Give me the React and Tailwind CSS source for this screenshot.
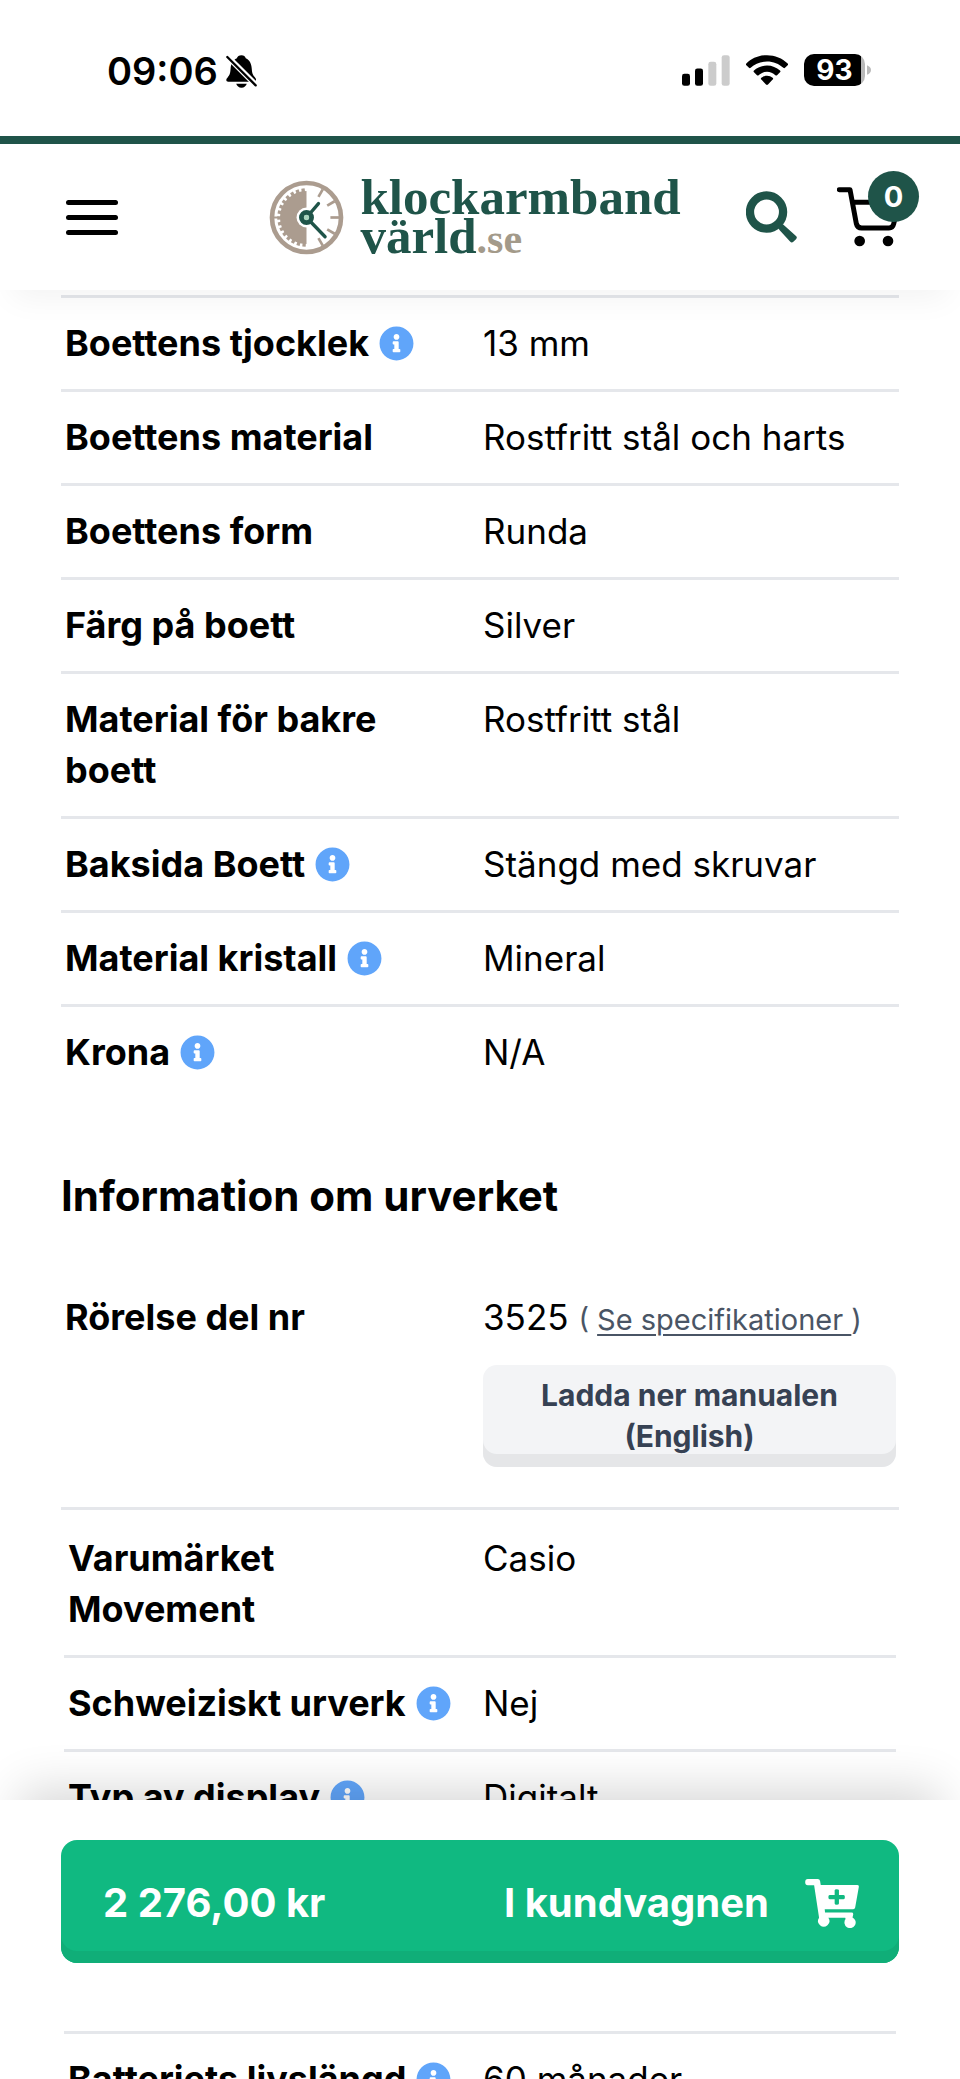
import React from 'react';
import { FaInfoCircle } from 'react-icons/fa';

const caseRows = [
  { label: 'Boettens tjocklek', value: '13 mm', info: true },
  { label: 'Boettens material', value: 'Rostfritt stål och harts' },
  { label: 'Boettens form', value: 'Runda' },
  { label: 'Färg på boett', value: 'Silver' },
  { label: 'Material för bakre boett', value: 'Rostfritt stål' },
  { label: 'Baksida Boett', value: 'Stängd med skruvar', info: true },
  { label: 'Material kristall', value: 'Mineral', info: true },
  { label: 'Krona', value: 'N/A', info: true },
];

const movementRows = [
  { label: 'Varumärket Movement', value: 'Casio' },
  { label: 'Schweiziskt urverk', value: 'Nej', info: true },
  { label: 'Typ av display', value: 'Digitalt', info: true },
];

function BellOff() {
  return (
    <svg viewBox="0 0 92 100" className="w-[31px] h-[33px]" aria-label="Ljudlös">
      <path d="M46 1c-8 0-12 4-14 9-13 5-18 17-19 31-1 15-3 20-9 27-3 3-4 5-4 8 0 4 2 5 6 5h76c5 0 8-2 8-6 0-3-2-5-4-8-6-7-8-12-9-26-1-14-6-26-18-31-2-5-6-9-13-9z" />
      <path d="M30 87h32c-2 7-8 12-16 12s-14-5-16-12z" />
      <path d="M0 1 L92 93" stroke="white" strokeWidth="17" />
      <path d="M3 6 L89 92" stroke="black" strokeWidth="7" strokeLinecap="round" />
    </svg>
  );
}

function Signal() {
  return (
    <svg viewBox="0 0 144 92" className="w-[48px] h-[31px]" aria-label="Signal">
      <rect x="0" y="56" width="24" height="36" rx="7" />
      <rect x="39" y="40" width="24" height="52" rx="7" />
      <rect x="79" y="20" width="24" height="72" rx="7" fill="#cccccc" />
      <rect x="119" y="0" width="24" height="92" rx="7" fill="#cccccc" />
    </svg>
  );
}

function Wifi() {
  return (
    <svg viewBox="0 0 126 92" className="w-[42px] h-[31px]" aria-label="Wifi">
      <path d="M63 0C39 0 17 9 1 25c-2 2-2 3 0 5l8 8c2 2 3 1 5 0 13-12 30-19 49-19s36 7 49 19c2 1 3 2 5 0l8-8c2-2 2-3 0-5C109 9 87 0 63 0z" />
      <path d="M63 31c-15 0-29 6-39 15-2 2-2 3 0 5l9 9c2 2 3 1 5 0 7-6 15-10 25-10s18 4 25 10c2 1 3 2 5 0l9-9c2-2 2-3 0-5-10-9-24-15-39-15z" />
      <path d="M63 62c-7 0-12 2-17 6-2 2-2 3 0 5l14 15c2 2 4 2 6 0l14-15c2-2 2-3 0-5-5-4-10-6-17-6z" />
    </svg>
  );
}

function Battery() {
  return (
    <div className="flex items-center">
      <div className="flex h-8 w-[61px] items-center justify-center overflow-hidden rounded-[10px] bg-gradient-to-r from-black from-94% to-[#b9b9b9] to-94% text-[28px] font-bold leading-none text-white">
        93
      </div>
      <svg viewBox="0 0 5 12" className="ml-[2px] h-3 w-1">
        <path d="M0 0 Q5 2 5 6 Q5 10 0 12z" fill="#b9b9b9" />
      </svg>
    </div>
  );
}

function ClockLogo() {
  const teeth = [95, 107, 119, 131, 143, 155, 167, 179, 191, 203, 215, 227, 239, 251, 263];
  const ticks = [-60, -30, 0, 30, 60];
  return (
    <svg viewBox="-112 -113 224 226" className="h-[75px] w-[75px] shrink-0">
      <circle r="104" fill="none" stroke="#ab9c8f" strokeWidth="14" />
      <path d="M0 -80 A80 80 0 0 0 0 80z" fill="#ab9c8f" />
      {teeth.map((a) => (
        <rect key={a} x="76" y="-5" width="12" height="10" fill="#ab9c8f" transform={`rotate(${a})`} />
      ))}
      {ticks.map((a) => (
        <rect key={a} x="72" y="-4" width="26" height="8" fill="#ab9c8f" transform={`rotate(${a})`} />
      ))}
      <path d="M-100 0H-84" stroke="#ab9c8f" strokeWidth="6" />
      <circle r="30" fill="white" />
      <path d="M0 0L36 -42M0 0L56 58" stroke="#1f5449" strokeWidth="10" strokeLinecap="round" />
      <circle r="15" fill="white" stroke="#1f5449" strokeWidth="15" />
      <circle r="8" fill="#a9d3bd" />
    </svg>
  );
}

function SearchIcon() {
  return (
    <svg viewBox="0 0 154 156" className="h-[52px] w-[51px]" fill="#1f5449">
      <circle cx="62" cy="63" r="50" fill="none" stroke="#1f5449" strokeWidth="25" />
      <path d="M114 102L151 135Q156 140 151 145L143 153Q138 158 133 152L101 117Q97 112 101 108L96 98L104 91L108 101Q111 99 114 102z" />
    </svg>
  );
}

function CartIcon() {
  return (
    <svg viewBox="0 0 192 180" className="h-[60px] w-[64px]">
      <path
        d="M7 8H39L58 110Q61 123 74 123H156Q167 123 170 111L186 46H46"
        fill="none"
        stroke="black"
        strokeWidth="15"
        strokeLinecap="round"
        strokeLinejoin="round"
      />
      <circle cx="68" cy="162" r="16" />
      <circle cx="153" cy="162" r="16" />
    </svg>
  );
}

function CartPlusIcon() {
  return (
    <svg viewBox="0 0 162 148" className="h-[49px] w-[54px] shrink-0" fill="white">
      <path
        fillRule="evenodd"
        d="M8 0H38Q44 0 45 6L47 18H157Q163 18 162 24L151 86Q150 91 145 91H59L60 101H140Q146 101 145 107L143 116A17 17 0 1 1 122 121L121 117H70A17 17 0 1 1 42 117L27 19H8Q0 19 0 10Q0 0 8 0zM89 34V48H74Q70 48 70 54Q70 61 74 61H89V74Q89 78 95 78Q102 78 102 74V61H116Q120 61 120 54Q120 48 116 48H102V34Q102 31 95 31Q89 31 89 34z"
      />
    </svg>
  );
}

function SpecRow({ label, value, info, border = 'border-b-3' }) {
  return (
    <tr>
      <th scope="row" className={`w-1/2 border-gray-200 py-5 pl-1 pr-7 text-left align-top text-[36px] font-bold ${border}`}>
        {label}
        {info && (
          <button type="button" aria-label={`Info om ${label}`} className="ml-[10px] inline-flex h-[35px] w-[35px] align-[-5px]">
            <FaInfoCircle size={35} className="text-[#60a5fa]" />
          </button>
        )}
      </th>
      <td className={`border-gray-200 py-5 pl-[3px] align-top ${border}`}>{value}</td>
    </tr>
  );
}

export default function App() {
  return (
    <div className="relative flex h-screen flex-col overflow-hidden bg-white font-['Inter',sans-serif] text-black">
      {/* Status bar */}
      <div className="flex h-[136px] shrink-0 items-center justify-between pl-[107px] pr-[89px]">
        <div className="flex items-center gap-2 pt-[6px]">
          <span className="text-[38px] font-semibold leading-none">09:06</span>
          <BellOff />
        </div>
        <div className="flex items-center gap-4 pt-1">
          <Signal />
          <Wifi />
          <Battery />
        </div>
      </div>

      {/* Header */}
      <header className="relative z-10 flex h-[154px] shrink-0 items-center justify-between border-t-8 border-[#1f5449] bg-white pl-[66px] pr-[43px] shadow-[0_20px_30px_-12px_rgba(0,0,0,0.05)]">
        <button type="button" aria-label="Meny" className="flex w-[52px] flex-col gap-[10px]">
          <span className="h-[5px] rounded-full bg-black" />
          <span className="h-[5px] rounded-full bg-black" />
          <span className="h-[5px] rounded-full bg-black" />
        </button>
        <a href="#" className="ml-[86px] flex items-center gap-4">
          <ClockLogo />
          <span className="flex flex-col pt-1 font-['Liberation_Serif',serif] text-[51px] font-bold leading-[39px] text-[#1f5449]">
            <span>klockarmband</span>
            <span>
              värld<span className="text-[42px] leading-none text-[#a39a8a]">.se</span>
            </span>
          </span>
        </a>
        <div className="flex items-center gap-10">
          <button type="button" aria-label="Sök">
            <SearchIcon />
          </button>
          <button type="button" aria-label="Kundvagn" className="relative mr-4">
            <CartIcon />
            <span className="absolute -right-[18px] -top-4 flex h-[51px] w-[51px] items-center justify-center rounded-full bg-[#1f5449] text-[29px] font-bold text-white">
              0
            </span>
          </button>
        </div>
      </header>

      {/* Specs */}
      <main className="min-h-0 flex-1 overflow-hidden px-[61px] pt-[5px] text-[35px] leading-[51px]">
        <table className="w-full table-fixed border-separate border-spacing-0 border-t-3 border-gray-200">
          <tbody>
            {caseRows.map((r, i) => (
              <SpecRow key={r.label} {...r} border={i === caseRows.length - 1 ? 'border-b-0' : 'border-b-3'} />
            ))}
          </tbody>
        </table>

        <h2 className="mb-12 mt-[70px] text-[42px] font-bold leading-[56px]">Information om urverket</h2>

        <table className="w-full table-fixed border-separate border-spacing-0">
          <tbody>
            <tr>
              <th scope="row" className="w-1/2 border-b-3 border-gray-200 py-5 pl-1 text-left align-top text-[36px] font-bold">
                Rörelse del nr
              </th>
              <td className="border-b-3 border-gray-200 pb-10 pl-[3px] pr-[3px] pt-5 align-top">
                <div>
                  3525{' '}
                  <span className="text-[29px] text-gray-600">
                    ( <a href="#" className="underline decoration-2 underline-offset-4">Se specifikationer&nbsp;</a>)
                  </span>
                </div>
                <button
                  type="button"
                  className="mt-5 block w-full rounded-[14px] bg-gray-100 px-10 py-[10px] text-[30px] font-bold leading-[41px] text-gray-700 shadow-[inset_0_-13px_0_#e5e6e8]"
                >
                  Ladda ner manualen (English)
                </button>
              </td>
            </tr>
          </tbody>
        </table>

        <div className="p-[3px]">
          <table className="w-full table-fixed border-separate border-spacing-0">
            <tbody>
              {movementRows.map((r) => (
                <SpecRow key={r.label} {...r} />
              ))}
              {/* rows under the buy bar */}
              <tr>
                <td colSpan="2" className="h-[188px] border-b-3 border-gray-200"></td>
              </tr>
              <SpecRow label="Batteriets livslängd" value="60 månader" info />
            </tbody>
          </table>
        </div>
      </main>

      {/* Buy bar */}
      <div className="absolute inset-x-0 bottom-[76px] z-10 bg-white px-[61px] py-10 shadow-[0_-30px_45px_-20px_rgba(0,0,0,0.16)]">
        <button
          type="button"
          className="flex h-[123px] w-full items-center justify-between rounded-2xl bg-[#10b981] pl-[42px] pr-10 pt-[3px] text-[40px] font-bold text-white shadow-[inset_0_-12px_0_#10ae78]"
        >
          <span>2 276,00 kr</span>
          <span className="flex items-center gap-9">
            I kundvagnen
            <CartPlusIcon />
          </span>
        </button>
      </div>
    </div>
  );
}
